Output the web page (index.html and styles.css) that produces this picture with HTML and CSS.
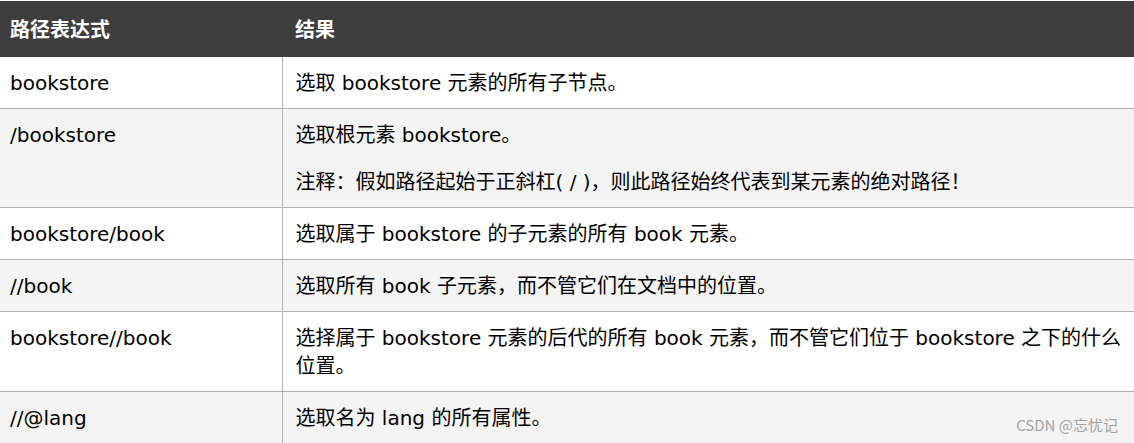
FILE: index.html
```html
<!DOCTYPE html>
<html lang="zh">
<head>
<meta charset="utf-8">
<link rel="stylesheet" href="styles.css">
</head>
<body>
<table class="xp">
  <colgroup><col class="c1"><col class="c2"></colgroup>
  <thead>
    <tr><th>路径表达式</th><th>结果</th></tr>
  </thead>
  <tbody>
    <tr><td>bookstore</td><td>选取 bookstore 元素的所有子节点。</td></tr>
    <tr class="alt"><td>/bookstore</td><td><p class="para">选取根元素 bookstore。</p><p class="para note">注释：假如路径起始于正斜杠( / )，则此路径始终代表到某元素的绝对路径！</p></td></tr>
    <tr><td>bookstore/book</td><td>选取属于 bookstore 的子元素的所有 book 元素。</td></tr>
    <tr class="alt"><td>//book</td><td>选取所有 book 子元素，而不管它们在文档中的位置。</td></tr>
    <tr><td>bookstore//book</td><td>选择属于 bookstore 元素的后代的所有 book 元素，而不管它们位于 bookstore 之下的什么位置。</td></tr>
    <tr class="alt"><td>//@lang</td><td>选取名为 lang 的所有属性。</td></tr>
  </tbody>
</table>
<div class="wm">CSDN @忘忧记</div>
</body>
</html>
```

FILE: styles.css
```css
html, body {
  margin: 0;
  padding: 0;
  background: #ffffff;
}
body {
  padding-top: 1px;
  width: 1134px;
  height: 442px;
  overflow: hidden;
  position: relative;
  font-family: "DejaVu Sans", "Noto Sans CJK SC", sans-serif;
  font-size: 20px;
  color: #000;
}
.xp {
  width: 1134px;
  border-collapse: collapse;
  table-layout: fixed;
}
.c1 { width: 282px; }
.c2 { width: 852px; }
.xp th {
  background: #3d3d3d;
  color: #fff;
  text-align: left;
  font-family: "Noto Sans CJK SC", sans-serif;
  font-weight: bold;
  font-size: 20px;
  height: 56px;
  padding: 0 10px 0 10px;
  line-height: 28px;
  vertical-align: middle;
}
.xp th + th { padding-left: 13px; }
.xp td {
  padding: 12px 10px 11px 10px;
  line-height: 28px;
  vertical-align: top;
  border-bottom: 1px solid #b0b0b0;
  border-right: 1px solid #b0b0b0;
}
.xp td + td {
  padding-left: 13px;
  padding-right: 12px;
  border-right: none;
}
.xp tr.alt td { background: #f4f4f4; }
.para { margin: 0; }
.note { margin-top: 19px; }
.wm {
  position: absolute;
  right: 16px;
  bottom: 8px;
  font-family: "Noto Sans CJK SC", sans-serif;
  font-size: 15px;
  color: #a3a3a3;
}
```
